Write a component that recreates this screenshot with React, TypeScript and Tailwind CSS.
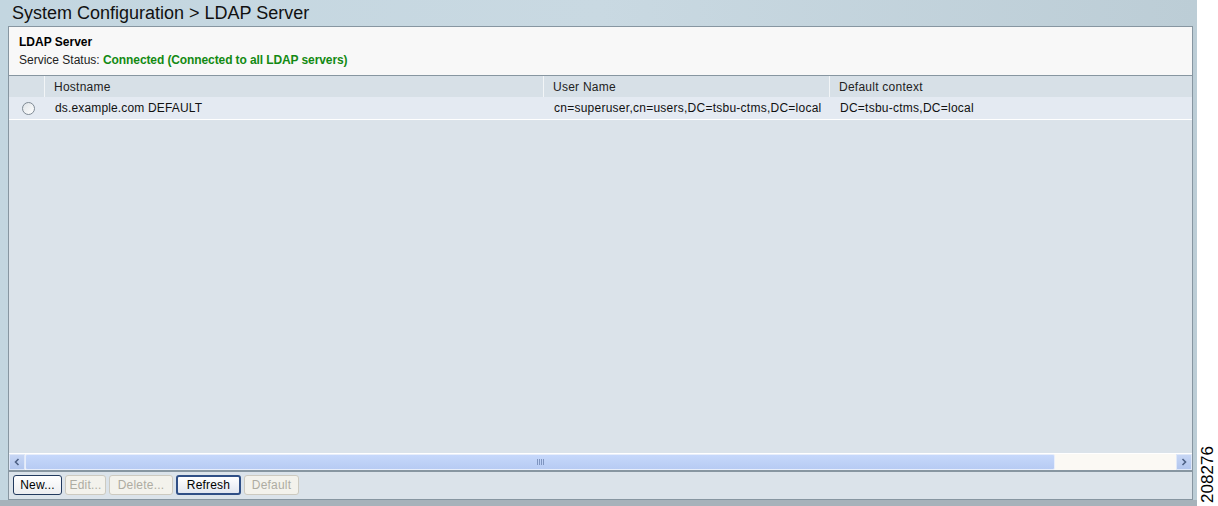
import React from "react";

const COLUMNS = [
  { key: "host", label: "Hostname", width: "w-[499px]" },
  { key: "user", label: "User Name", width: "w-[286px]" },
  { key: "ctx", label: "Default context", width: "flex-1" },
];

const ROWS = [
  {
    host: "ds.example.com DEFAULT",
    user: "cn=superuser,cn=users,DC=tsbu-ctms,DC=local",
    ctx: "DC=tsbu-ctms,DC=local",
  },
];

const BUTTONS = [
  { label: "New...", enabled: true, width: "w-[49px]" },
  { label: "Edit...", enabled: false, width: "w-[41px]" },
  { label: "Delete...", enabled: false, width: "w-[64px]" },
  { label: "Refresh", enabled: true, width: "w-[65px]", focused: true },
  { label: "Default", enabled: false, width: "w-[55px]" },
];

function Radio() {
  return (
    <span className="block w-[13px] h-[13px] rounded-full border border-[#7f8a94] bg-gradient-to-br from-[#dfe4e8] to-[#ffffff]" />
  );
}

function ScrollArrow({ dir }: { dir: "left" | "right" }) {
  return (
    <div className="w-[16px] h-[16px] flex items-center justify-center bg-gradient-to-b from-[#c7d6f4] to-[#b2c6ee] border border-[#dfe8f8]">
      <svg width="8" height="8" viewBox="0 0 8 8">
        {dir === "left" ? (
          <path d="M5.5 1 L2.5 4 L5.5 7" fill="none" stroke="#4d6185" strokeWidth="1.6" />
        ) : (
          <path d="M2.5 1 L5.5 4 L2.5 7" fill="none" stroke="#4d6185" strokeWidth="1.6" />
        )}
      </svg>
    </div>
  );
}

export default function App() {
  return (
    <div
      className="w-[1218px] h-[506px] flex bg-white text-black"
      style={{ fontFamily: '"Liberation Sans", Arial, sans-serif' }}
    >
      <div className="w-[1197px] h-full flex flex-col bg-gradient-to-r from-[#c3d6e0] via-[#c9d9e2] to-[#bccdd6]">
        <div className="h-[26px] px-[12px] flex items-center text-[18px] leading-none text-[#111]">
          System Configuration &gt; LDAP Server
        </div>

        <div className="mx-[8px] w-[1185px] h-[474px] flex flex-col border border-[#8796a1] bg-[#dbe3ea]">
          <div className="h-[49px] bg-[#f8f8f8] border-b border-[#8796a1] px-[10px] pt-[8px] flex flex-col gap-[4px]">
            <div className="text-[12px] font-bold leading-[14px]">LDAP Server</div>
            <div className="text-[12px] leading-[14px] text-[#222]">
              <span>Service Status:</span>{" "}
              <span className="font-bold text-[#138a13] tracking-[-0.1px]">
                Connected (Connected to all LDAP servers)
              </span>
            </div>
          </div>

          <div className="h-[21px] flex bg-[#d7e0e7] text-[12px] text-[#222] tracking-[0.25px]">
            <div className="w-[36px] border-r border-[#f2f5f7]" />
            {COLUMNS.map((c, i) => (
              <div
                key={c.key}
                className={`${c.width} flex items-center pl-[9px] ${i < COLUMNS.length - 1 ? "border-r border-[#f2f5f7]" : ""}`}
              >
                {c.label}
              </div>
            ))}
          </div>

          {ROWS.map((r) => (
            <div key={r.host} className="h-[23px] flex bg-[#e4eaf2] border-b border-white text-[12px] text-[#111] tracking-[0.25px]">
              <div className="w-[37px] flex items-center justify-center pl-[1px]">
                <Radio />
              </div>
              <div className="w-[499px] flex items-center pl-[9px] tracking-[0.15px]">{r.host}</div>
              <div className="w-[286px] flex items-center pl-[9px]">{r.user}</div>
              <div className="flex-1 flex items-center pl-[9px]">{r.ctx}</div>
            </div>
          ))}

          <div className="flex-1" />

          <div className="h-[17px] flex items-center border-t border-white">
            <ScrollArrow dir="left" />
            <div className="flex-1 h-[16px] flex bg-[#fbf9f4]">
              <div className="w-[1030px] h-full bg-gradient-to-b from-[#c6d8fb] to-[#b7cbf3] border border-[#e8eefb] rounded-[2px] flex items-center justify-center">
                <div className="flex gap-[1px]">
                  <span className="w-[1px] h-[6px] bg-[#7f95c0]" />
                  <span className="w-[1px] h-[6px] bg-[#7f95c0]" />
                  <span className="w-[1px] h-[6px] bg-[#7f95c0]" />
                  <span className="w-[1px] h-[6px] bg-[#7f95c0]" />
                </div>
              </div>
            </div>
            <ScrollArrow dir="right" />
          </div>

          <div className="h-[29px] border-t-2 border-[#8796a1] flex items-center gap-[3px] pl-[4px] pb-[1px]">
            {BUTTONS.map((b) => (
              <button
                key={b.label}
                type="button"
                className={`${b.width} h-[20px] rounded-[3px] text-[12px] leading-none tracking-[0.2px] flex items-center justify-center ${
                  b.focused
                    ? "border-2 border-[#2f4f86] bg-gradient-to-b from-[#ffffff] to-[#e2e7f0] text-black"
                    : b.enabled
                      ? "border border-[#223a5e] bg-gradient-to-b from-[#ffffff] to-[#ecedf0] text-black"
                      : "border border-[#cdcac0] bg-[#f3f2ec] text-[#aeaca2]"
                }`}
              >
                {b.label}
              </button>
            ))}
          </div>
        </div>

        <div className="flex-1 bg-[#a6b2ba]" />
      </div>

      <div className="flex-1 relative">
        <span className="absolute left-[-21px] top-[466px] w-[62px] -rotate-90 text-[17px] leading-none text-black text-center">
          208276
        </span>
      </div>
    </div>
  );
}
